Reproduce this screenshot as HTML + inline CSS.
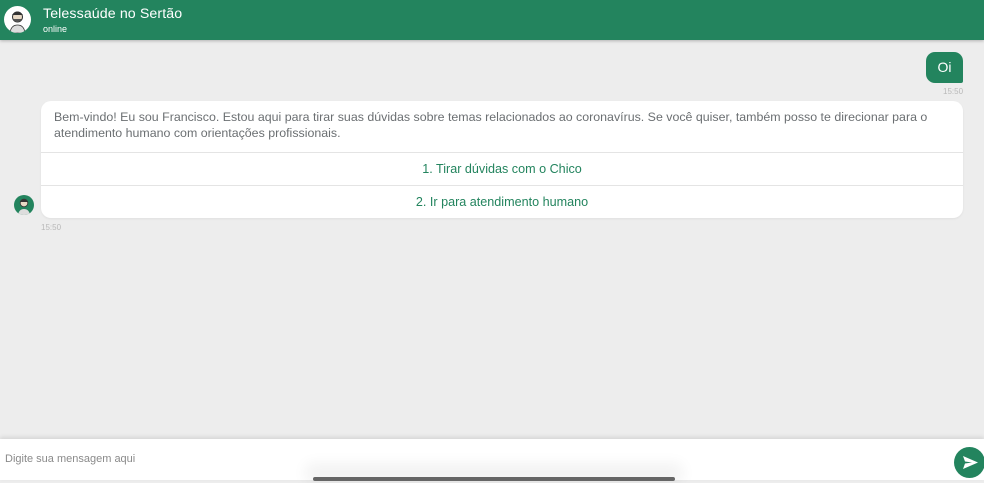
<!DOCTYPE html>
<html><head><meta charset="utf-8"><style>
*{margin:0;padding:0;box-sizing:border-box}
body{width:984px;height:480px;overflow:hidden;background:#ededed;font-family:"Liberation Sans",sans-serif;position:relative}
.hdr{position:absolute;left:0;top:0;width:984px;height:40px;background:#23845e;box-shadow:0 1px 3px rgba(0,0,0,.25)}
.av{position:absolute;left:4px;top:6px;width:27px;height:27px;border-radius:50%;background:#fff;overflow:hidden}
.t1{position:absolute;left:43px;top:6px;color:#fff;font-size:14.2px;letter-spacing:.1px}
.t2{position:absolute;left:43px;top:24px;color:#fff;font-size:9px}
.oi{position:absolute;left:926px;top:52px;width:37px;height:31px;background:#23845e;border-radius:9px 9px 2px 9px;color:#fff;font-size:14px;text-align:center;line-height:31px}
.tm{position:absolute;font-size:8px;color:#b9b9b9}
.bot{position:absolute;left:41px;top:101px;width:922px;height:117px;background:#fff;border-radius:10px;box-shadow:0 1px 2px rgba(0,0,0,.06)}
.msg{padding:8px 13px;font-size:12.4px;line-height:16px;color:#6b6f72;height:51px;white-space:nowrap}
.opt{border-top:1px solid #e4e4e4;height:33px;line-height:32px;text-align:center;color:#23845e;font-size:12.6px}
.sav{position:absolute;left:14px;top:195px;width:20px;height:20px;border-radius:50%;background:#23845e;overflow:hidden}
.inp{position:absolute;left:0;top:439px;width:984px;height:41px;background:#fff;box-shadow:0 -2px 4px rgba(0,0,0,.1)}
.ph{position:absolute;left:5px;top:14px;font-size:11px;color:#8a8a8a}
.send{position:absolute;left:954px;top:447px;width:31px;height:31px;border-radius:50%;background:#23845e}
.bar{position:absolute;left:313px;top:477px;width:362px;height:4px;background:#666;border-radius:2px;box-shadow:0 -6px 14px 8px rgba(0,0,0,.05)}
</style></head><body>
<div class="hdr">
 <div class="av"><svg width="27" height="27" viewBox="0 0 27 27"><circle cx="13.5" cy="11" r="5" fill="#e8d9c5" stroke="#333" stroke-width="1"/><path d="M8 9q5-7 11 0" fill="#333"/><path d="M9 13q4 6 9 0" fill="#555"/><path d="M6 27q1-8 7.5-8t7.5 8z" fill="#ddd" stroke="#333" stroke-width=".8"/></svg></div>
 <div class="t1">Telessaúde no Sertão</div>
 <div class="t2">online</div>
</div>
<div class="oi">Oi</div>
<div class="tm" style="left:943px;top:87px">15:50</div>
<div class="bot">
 <div class="msg">Bem-vindo! Eu sou Francisco. Estou aqui para tirar suas dúvidas sobre temas relacionados ao coronavírus. Se você quiser, também posso te direcionar para o<br>atendimento humano com orientações profissionais.</div>
 <div class="opt">1. Tirar dúvidas com o Chico</div>
 <div class="opt">2. Ir para atendimento humano</div>
</div>
<div class="sav"><svg width="20" height="20" viewBox="0 0 20 20"><circle cx="10" cy="8" r="3.8" fill="#e8d9c5" stroke="#333" stroke-width=".8"/><path d="M6 7q4-5 8 0" fill="#333"/><path d="M4 20q1-6 6-6t6 6z" fill="#ddd"/></svg></div>
<div class="tm" style="left:41px;top:223px">15:50</div>
<div class="inp"><div class="ph">Digite sua mensagem aqui</div></div>
<div class="send"><svg width="31" height="31" viewBox="0 0 31 31"><path d="M9 9l15 6.5L9 22l2-5.5 7-1-7-1z" fill="#fff"/></svg></div>
<div class="bar"></div>
</body></html>
